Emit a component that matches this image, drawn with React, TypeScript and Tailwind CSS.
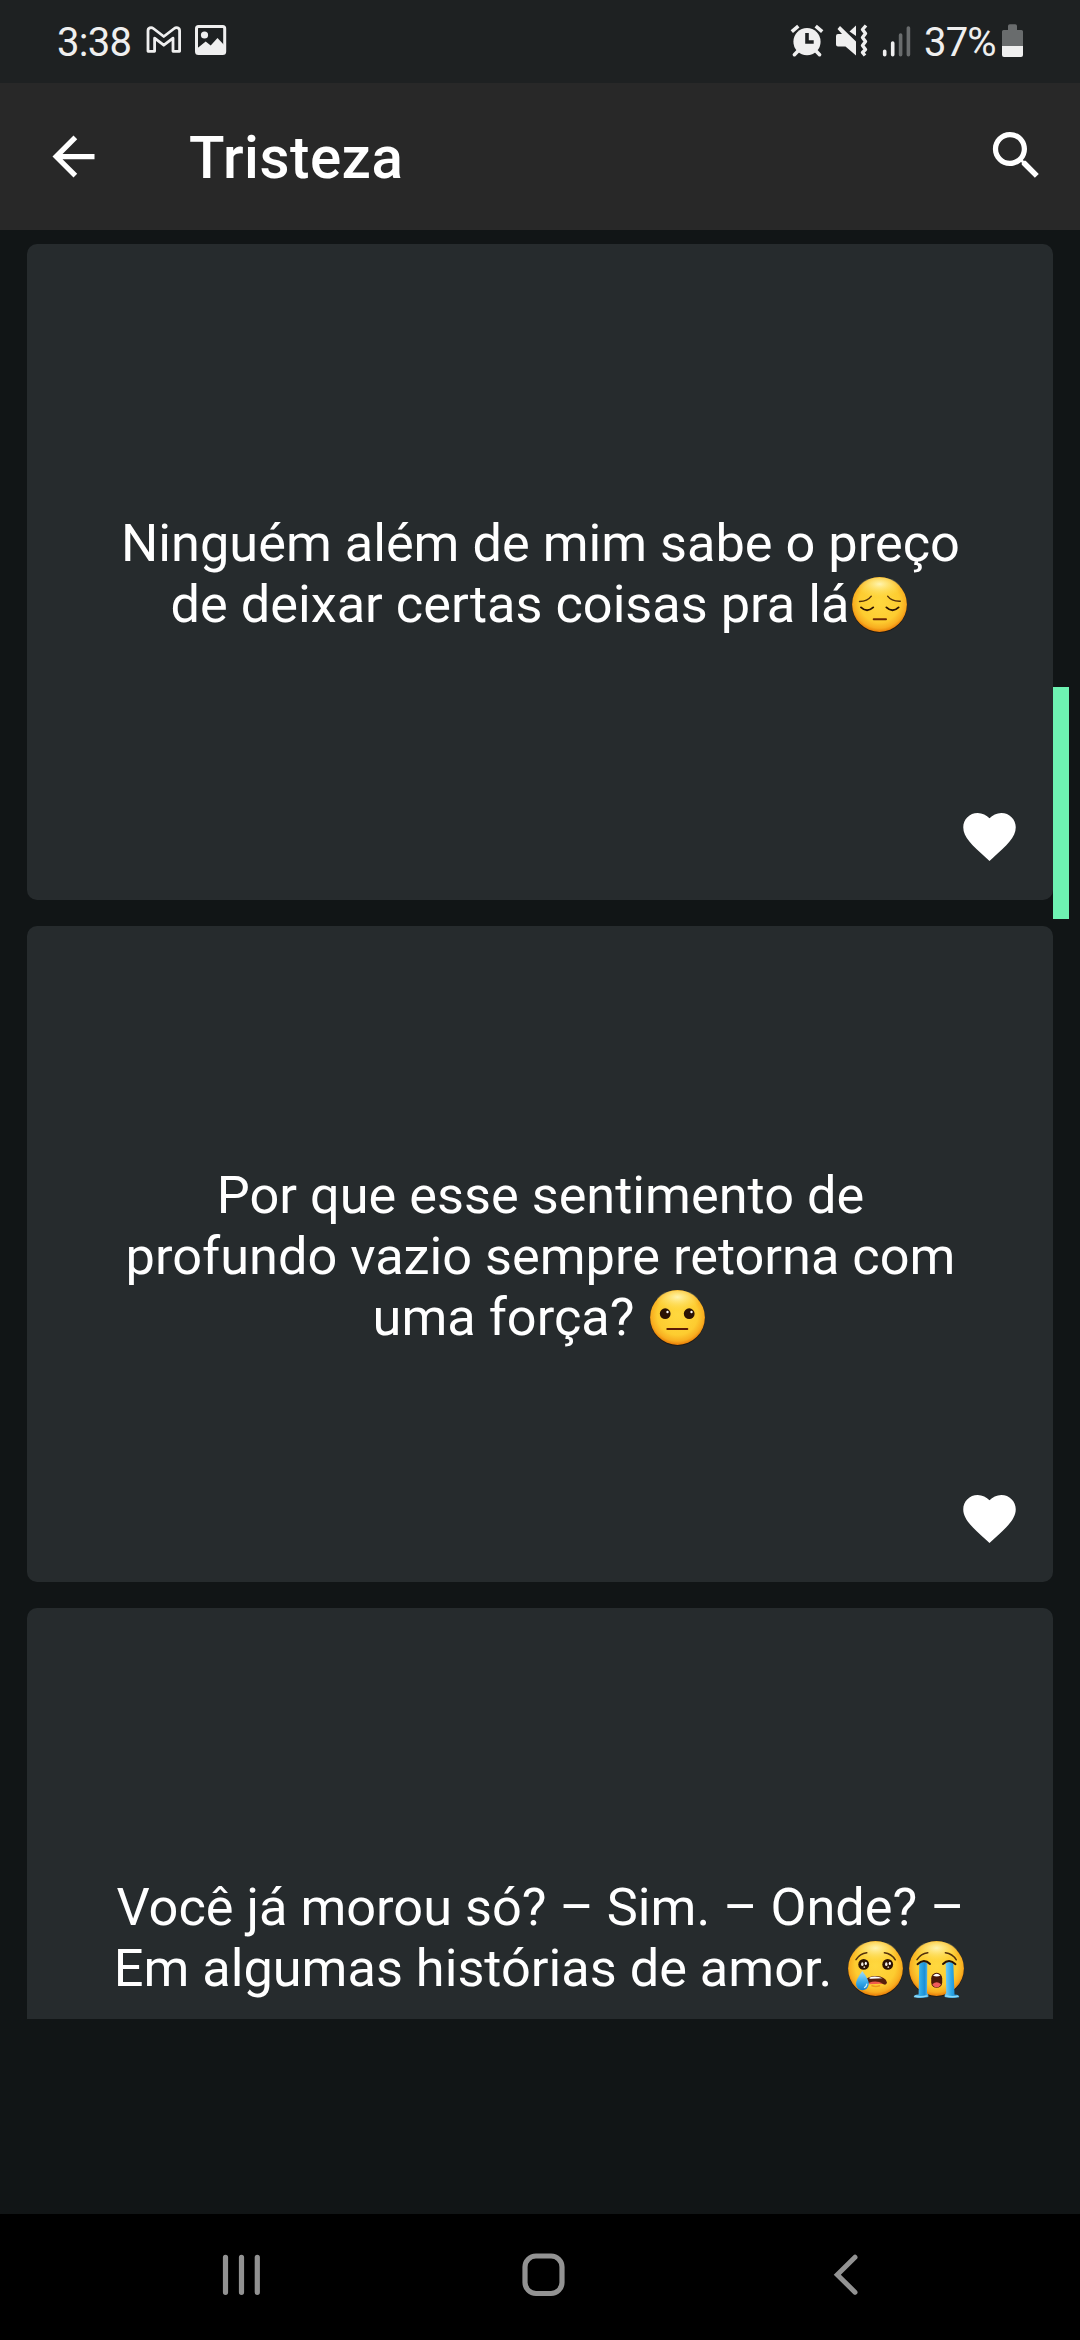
import type { ReactNode } from "react";

function StatusBar() {
  return (
    <div className="flex h-[83px] shrink-0 items-start justify-between bg-[#1e2122] pt-[23px] pl-[57px] pr-[56px] text-[40px] leading-[36px] text-[#efefef]">
      <div className="flex">
        <span className="w-[88px] pt-[2px] tracking-[-0.7px]">3:38</span>
        <svg className="ml-[1px] h-[36px] w-[36px]" viewBox="0 0 36 36" fill="none" stroke="#efefef" strokeWidth="2.8" strokeLinejoin="round">
          <path d="M2 28.3V7.8C2 4.8 5.2 3.8 7.4 5.5L17.8 13.5 28.2 5.5C30.4 3.8 33.6 4.8 33.6 7.8V28.3H27V15.2L17.8 22.2 8.6 15.2V28.3Z" />
        </svg>
        <svg className="ml-[13px] h-[36px] w-[32px]" viewBox="0 0 32 36">
          <rect x="1.5" y="3.5" width="28.2" height="27" rx="2" fill="none" stroke="#efefef" strokeWidth="3" />
          <circle cx="9.5" cy="12" r="3.6" fill="#efefef" />
          <path d="M2 25.5 10.7 18.5 15.7 22.5 22.5 15 30 23V31H2Z" fill="#efefef" />
        </svg>
      </div>
      <div className="flex">
        <svg className="h-[36px] w-[34px]" viewBox="0 0 34 36">
          <g stroke="#efefef" strokeWidth="3.6" fill="none">
            <path d="M1.8 8.7 8.3 3.2M25.7 3.2 32.2 8.7" />
            <path d="M8 28 4.4 31.7M26 28 29.6 31.7" strokeLinecap="round" />
          </g>
          <circle cx="17" cy="18.7" r="13.6" fill="#efefef" />
          <path d="M17 10V19H23.7" fill="none" stroke="#1e2122" strokeWidth="3.6" />
        </svg>
        <svg className="ml-[12px] h-[36px] w-[34px]" viewBox="0 0 34 36">
          <path d="M0 13Q0 11 2 11H6L1.5 6 4 3 20 18.5V32.5L9.5 23.5H2Q0 23.5 0 21.5Z" fill="#efefef" />
          <path d="M20 2.5V13L13.5 8.5Z" fill="#efefef" />
          <path d="M30 2.5 26.5 6.5 29.5 10.5 26.5 14.5 29.5 18.5 26.5 22.5 29.5 26.5 26.5 29.5 29 32.5" fill="none" stroke="#efefef" strokeWidth="3.4" strokeLinejoin="round" />
        </svg>
        <svg className="ml-[12px] h-[36px] w-[30px]" viewBox="0 0 30 36" strokeWidth="3.6" strokeLinecap="round">
          <path d="M2.7 28.2V31.8M10.7 20V31.8" stroke="#efefef" />
          <path d="M18.6 12V31.8M26.4 5V31.8" stroke="#696c6d" />
        </svg>
        <span className="ml-[12px] w-[78px] pt-[2px] tracking-[-0.8px]">37%</span>
        <svg className="h-[36px] w-[22px]" viewBox="0 0 22 36">
          <path d="M6 7V3Q6 1.2 7.8 1.2H13.2Q15 1.2 15 3V7H19.5Q21 7 21 8.5V23H0V8.5Q0 7 1.5 7Z" fill="#696c6d" />
          <path d="M0 23H21V32Q21 34 19 34H2Q0 34 0 32Z" fill="#efefef" />
        </svg>
      </div>
    </div>
  );
}

function AppBar() {
  return (
    <header className="flex h-[147px] shrink-0 items-start bg-[#282828] pl-[42px] pr-[32px] text-white">
      <svg className="mt-[42px] size-[63px]" viewBox="0 0 24 24" fill="currentColor">
        <path d="M20 11H7.83l5.59-5.59L12 4l-8 8 8 8 1.41-1.41L7.83 13H20v-2z" />
      </svg>
      <h1 className="mt-[41px] ml-[84px] flex-1 text-[58.3px] leading-[68px] font-medium tracking-[0.5px]">Tristeza</h1>
      <svg className="mt-[41px] size-[63px]" viewBox="0 0 24 24" fill="currentColor">
        <path d="M15.5 14h-.79l-.28-.27C15.41 12.59 16 11.11 16 9.5 16 5.91 13.09 3 9.5 3S3 5.91 3 9.5 5.91 16 9.5 16c1.61 0 3.09-.59 4.23-1.57l.27.28v.79l5 4.99L20.49 19l-4.99-5zm-6 0C7.01 14 5 11.99 5 9.5S7.01 5 9.5 5 14 7.01 14 9.5 11.99 14 9.5 14z" />
      </svg>
    </header>
  );
}

function EmojiDefs() {
  return (
    <svg className="absolute size-0" aria-hidden="true">
      <defs>
        <radialGradient id="face" cx="0.5" cy="0.45" r="0.56">
          <stop offset="0" stopColor="#ffd83f" />
          <stop offset="0.66" stopColor="#fdcc30" />
          <stop offset="0.86" stopColor="#f8ad20" />
          <stop offset="1" stopColor="#e57403" />
        </radialGradient>
        <radialGradient id="shine" cx="0.5" cy="0.3" r="0.6">
          <stop offset="0" stopColor="#fff6b8" stopOpacity="0.95" />
          <stop offset="1" stopColor="#ffe35c" stopOpacity="0" />
        </radialGradient>
        <linearGradient id="water" x1="0" y1="0" x2="1" y2="0">
          <stop offset="0" stopColor="#7fd3f7" />
          <stop offset="0.45" stopColor="#2fa9e8" />
          <stop offset="0.75" stopColor="#1b8fd6" />
          <stop offset="1" stopColor="#67c4f0" />
        </linearGradient>
        <linearGradient id="drop" x1="0" y1="0" x2="0" y2="1">
          <stop offset="0" stopColor="#a5def8" />
          <stop offset="0.6" stopColor="#36aaea" />
          <stop offset="1" stopColor="#137fcb" />
        </linearGradient>
      </defs>
    </svg>
  );
}

function Face({ label, children }: { label: string; children: ReactNode }) {
  return (
    <svg className="inline-block size-[61px] overflow-visible align-[-13px]" viewBox="0 0 61 61" role="img" aria-label={label} fill="none" strokeLinecap="round">
      <circle cx="30.5" cy="31.3" r="27.5" fill="#1a1208" opacity="0.7" />
      <circle cx="30.5" cy="30.5" r="27.4" fill="url(#face)" />
      <ellipse cx="30.5" cy="14.5" rx="21" ry="11" fill="url(#shine)" />
      {children}
    </svg>
  );
}

function Eye({ x, y, wet = false }: { x: number; y: number; wet?: boolean }) {
  return (
    <g>
      <circle cx={x} cy={y} r="5.4" fill="#2b1204" />
      {wet ? (
        <>
          <ellipse cx={x - 1.4} cy={y - 0.2} rx="1.2" ry="1.9" fill="#f2ece4" />
          <ellipse cx={x + 2.1} cy={y - 1} rx="1.1" ry="1.7" fill="#fff" />
          <circle cx={x + 0.6} cy={y + 2.8} r="0.9" fill="#cbbfb0" />
        </>
      ) : (
        <circle cx={x + 2.3} cy={y - 1.7} r="1.2" fill="#fff" />
      )}
    </g>
  );
}

function Pensive() {
  return (
    <Face label="😔">
      <path d="M10.5 27.5Q18.5 27.5 22.3 22.2M38.6 22.2Q42.5 27.5 51.3 27.2" stroke="#53300b" strokeWidth="1.4" />
      <path d="M12 33.4Q18 39 24.2 33.4M37.4 33.4Q43.5 39 49.6 33.4" stroke="#2b1204" strokeWidth="1.9" />
      <path d="M24.7 45.2H37" stroke="#6b2505" strokeWidth="2" />
    </Face>
  );
}

function Neutral() {
  return (
    <Face label="😐">
      <Eye x={18.2} y={26.7} />
      <Eye x={42.2} y={26.7} />
      <path d="M20.3 42H40.3" stroke="#5c1a05" strokeWidth="2" />
    </Face>
  );
}

function Brows() {
  return <path d="M11 21.6Q14.8 15.8 21.8 14.8M39.4 14.8Q46.5 15.8 50.3 21.8" stroke="#53300b" strokeWidth="1.5" />;
}

function Crying() {
  return (
    <Face label="😢">
      <Brows />
      <Eye x={18.7} y={26.4} wet />
      <Eye x={42.7} y={26.4} wet />
      <path d="M21 41.5Q24 37.8 31 38Q40.5 38.5 42 44.5Q41.5 47.5 38.5 46.3Q32 43 23.5 45.5Z" fill="#57200c" />
      <path d="M24.5 39.4Q31 37 37.5 40.3Q31 40.8 24.5 40.7Z" fill="#fff" />
      <path d="M24 44.8Q31 42 38 45.6Q31 46.3 24 46.3Z" fill="#ef5a4c" />
      <path d="M27 47.8Q31 49.3 34.5 47.8" stroke="#eb991c" strokeWidth="1.6" />
      <path d="M17.3 33Q23.8 41.5 23.8 46A6.4 6.2 0 0 1 11 46Q11 41.5 17.3 33Z" fill="url(#drop)" />
      <path d="M19.5 49.5Q21.5 48.5 21.8 46.2" stroke="#c8edfd" strokeWidth="1.3" />
    </Face>
  );
}

function Sobbing() {
  return (
    <Face label="😭">
      <Brows />
      <path d="M13.3 25Q18 22.8 21.3 25L21 55Q23 57 22.3 59Q15 61 8 59.3Q6.8 57 12.6 56.5Z" fill="url(#water)" />
      <path d="M39.7 25Q43 22.8 47.3 25L48.5 56.5Q54.2 57 53 59.3Q46 61 38.7 59Q38 57 40.2 55Z" fill="url(#water)" />
      <path d="M9.5 58.2Q15 59.3 20.5 58M40.5 58Q46 59.3 51.5 58.2" stroke="#8bd9f8" strokeWidth="1.5" />
      <path d="M11.5 26.2Q18 19.8 24 26M37 26Q43 19.8 49.5 26.2" stroke="#2b1204" strokeWidth="1.9" />
      <rect x="25.2" y="34.8" width="11" height="15" rx="5.4" fill="#4a1807" />
      <path d="M27 37.8Q30.7 33.8 34.4 37.8Q30.7 39 27 37.8Z" fill="#fff" />
      <path d="M26.3 46.2Q30.7 42.2 35.1 46.2Q33.8 49.3 30.7 49.3T26.3 46.2Z" fill="#ef5a5a" />
    </Face>
  );
}

function QuoteCard({ lines }: { lines: ReactNode[] }) {
  return (
    <article className="relative flex h-[656px] shrink-0 flex-col items-center justify-center rounded-[10px] bg-[#262b2d] pt-[4px] pl-[1px] text-[52.3px] leading-[61px] whitespace-pre text-white">
      {lines.map((line, i) => (
        <p key={i} className="h-[61px]">{line}</p>
      ))}
      <svg className="absolute right-[32px] bottom-[32px] size-[63px]" viewBox="0 0 24 24" fill="currentColor">
        <path d="M12 21.35l-1.45-1.32C5.4 15.36 2 12.28 2 8.5 2 5.42 4.42 3 7.5 3c1.74 0 3.41.81 4.5 2.09C13.09 3.81 14.76 3 16.5 3 19.58 3 22 5.42 22 8.5c0 3.78-3.4 6.86-8.55 11.54L12 21.35z" />
      </svg>
    </article>
  );
}

function NavBar() {
  return (
    <nav className="flex h-[126px] shrink-0 bg-black pt-[30px] pr-[84px] pl-[90px]">
      <div className="flex w-[302px] justify-center">
        <svg className="size-[60px]" viewBox="0 0 60 60" stroke="#929292" strokeWidth="5.2" strokeLinecap="round">
          <path d="M14.5 13.3V48.3M30.5 13.3V48.3M46.3 13.3V48.3" />
        </svg>
      </div>
      <div className="flex w-[302px] justify-center">
        <svg className="size-[60px]" viewBox="0 0 60 60" fill="none" stroke="#929292" strokeWidth="5.2">
          <rect x="12" y="12" width="37" height="37.5" rx="11" />
        </svg>
      </div>
      <div className="flex w-[302px] justify-center">
        <svg className="size-[60px]" viewBox="0 0 60 60" fill="none" stroke="#929292" strokeWidth="5" strokeLinecap="round">
          <path d="M40 13.2 22.3 30.7 40 48.2" />
        </svg>
      </div>
    </nav>
  );
}

const quotes: ReactNode[][] = [
  ["Ninguém além de mim sabe o preço", <>de deixar certas coisas pra lá<Pensive /></>],
  ["Por que esse sentimento de", "profundo vazio sempre retorna com", <>uma força? <Neutral /></>],
  ["Você já morou só? – Sim. – Onde? –", <>Em algumas histórias de amor. <Crying /><Sobbing /></>],
];

export default function App() {
  return (
    <div className="flex h-[2340px] w-[1080px] flex-col overflow-hidden bg-[#111516] font-['Roboto',sans-serif]">
      <EmojiDefs />
      <StatusBar />
      <AppBar />
      <main className="relative h-[1789px] shrink-0 overflow-hidden">
        <div className="flex flex-col gap-[26px] px-[27px] pt-[14px]">
          {quotes.map((lines, i) => (
            <QuoteCard key={i} lines={lines} />
          ))}
        </div>
        <div className="absolute top-[457px] right-[11px] h-[232px] w-[16px] bg-[#6ef2b2]" />
      </main>
      <div className="flex-1" />
      <NavBar />
    </div>
  );
}
